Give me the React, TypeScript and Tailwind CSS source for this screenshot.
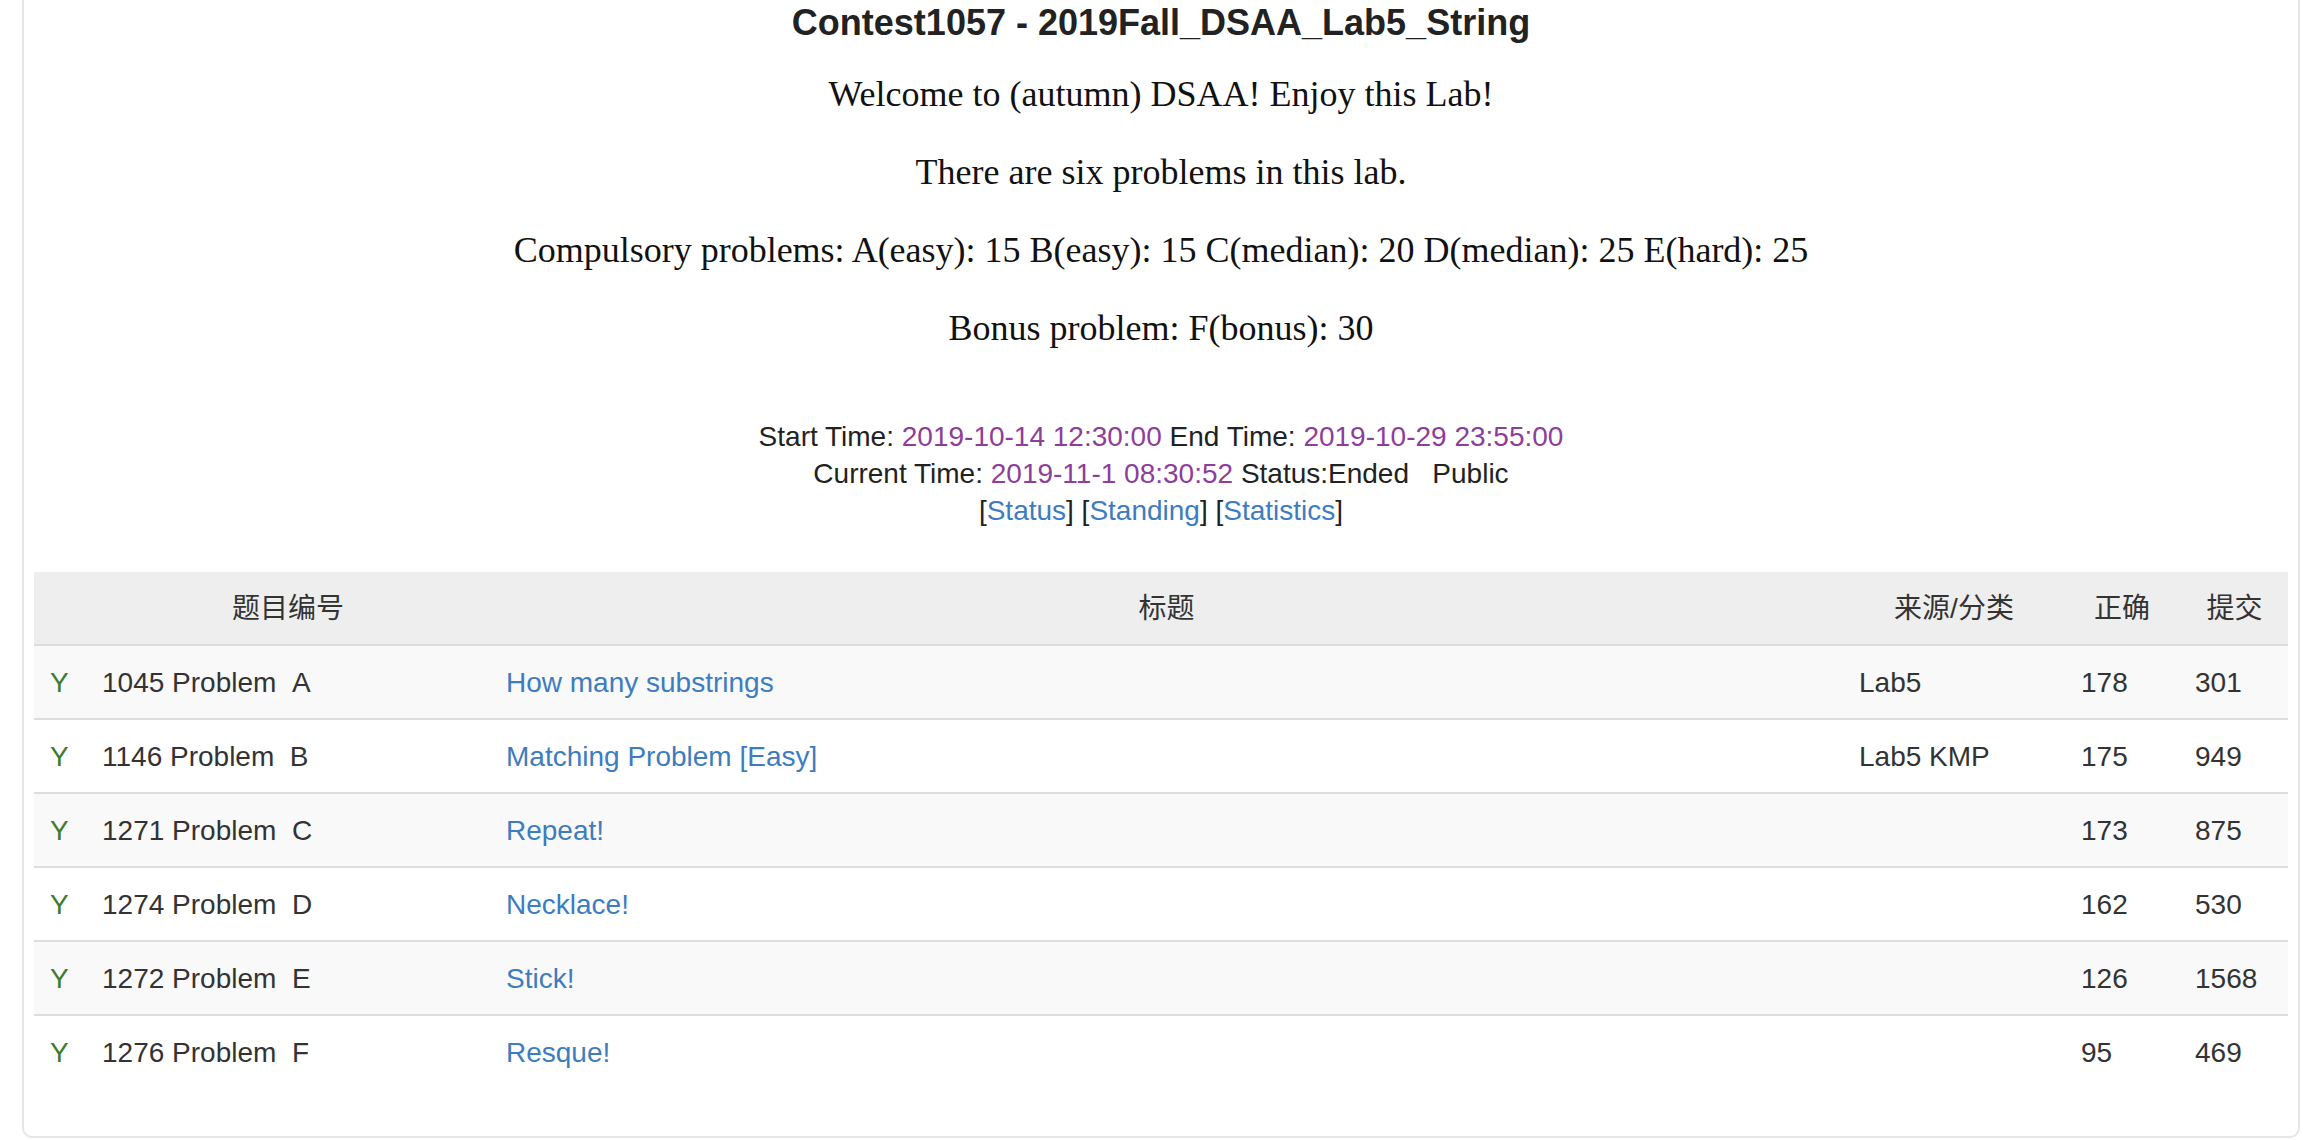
import React from "react";

const rows = [
  { id: "1045", letter: "A", title: "How many substrings", source: "Lab5", ac: "178", sub: "301" },
  { id: "1146", letter: "B", title: "Matching Problem [Easy]", source: "Lab5 KMP", ac: "175", sub: "949" },
  { id: "1271", letter: "C", title: "Repeat!", source: "", ac: "173", sub: "875" },
  { id: "1274", letter: "D", title: "Necklace!", source: "", ac: "162", sub: "530" },
  { id: "1272", letter: "E", title: "Stick!", source: "", ac: "126", sub: "1568" },
  { id: "1276", letter: "F", title: "Resque!", source: "", ac: "95", sub: "469" },
];

const cols = "grid grid-cols-[52px_404px_1353px_222px_114px_111px]";

export default function App() {
  return (
    <div className="w-[2322px] h-[1140px] overflow-hidden bg-white px-[22px] font-['Liberation_Sans','Noto_Sans_CJK_SC',sans-serif] text-[#333]">
      <div className="border-x-2 border-b-2 border-[#e6e6e6] rounded-b-[10px] px-[10px] pb-[48px]">
        <h3 className="pt-[3px] text-center text-[36px] leading-[40px] font-bold text-[#222]">
          Contest1057 - 2019Fall_DSAA_Lab5_String
        </h3>
        <div className="mt-[12px] text-center font-['Liberation_Serif',serif] text-[36px] leading-[78px] text-[#111]">
          <p>Welcome to (autumn) DSAA! Enjoy this Lab!</p>
          <p>There are six problems in this lab.</p>
          <p>Compulsory problems: A(easy): 15 B(easy): 15 C(median): 20 D(median): 25 E(hard): 25</p>
          <p>Bonus problem: F(bonus): 30</p>
        </div>
        <div className="mt-[51px] text-center text-[28px] leading-[37px] text-[#222]">
          <div>
            Start Time: <span className="text-[#8f3d9b]">2019-10-14 12:30:00</span> End Time:{" "}
            <span className="text-[#8f3d9b]">2019-10-29 23:55:00</span>
          </div>
          <div>
            Current Time: <span className="text-[#8f3d9b]">2019-11-1 08:30:52</span> Status:Ended{"\u00a0\u00a0\u00a0"}Public
          </div>
          <div>
            [<a className="text-[#3d7cc0]">Status</a>] [<a className="text-[#3d7cc0]">Standing</a>] [
            <a className="text-[#3d7cc0]">Statistics</a>]
          </div>
        </div>
        <div className="mt-[43px] text-[28px] leading-[37px]">
          <div className={`${cols} h-[74px] items-center bg-[#eee] border-b-2 border-[#ddd] text-[#333]`}>
            <div></div>
            <div className="text-center">题目编号</div>
            <div className="text-center">标题</div>
            <div className="text-center">来源/分类</div>
            <div className="text-center">正确</div>
            <div className="text-center">提交</div>
          </div>
          {rows.map((r, i) => (
            <div
              key={r.id}
              className={`${cols} items-center ${i === 0 ? "h-[72px]" : "h-[74px] border-t-2 border-[#ddd]"} ${
                i % 2 === 0 ? "bg-[#f9f9f9]" : "bg-white"
              }`}
            >
              <div className="pl-4 text-[#3c7d2e]">Y</div>
              <div className="pl-4 whitespace-pre">{`${r.id} Problem\u00a0\u00a0${r.letter}`}</div>
              <div className="pl-4">
                <a className="text-[#3d7cc0]">{r.title}</a>
              </div>
              <div className="pl-4">{r.source}</div>
              <div className="pl-4">{r.ac}</div>
              <div className="pl-4">{r.sub}</div>
            </div>
          ))}
        </div>
      </div>
    </div>
  );
}
